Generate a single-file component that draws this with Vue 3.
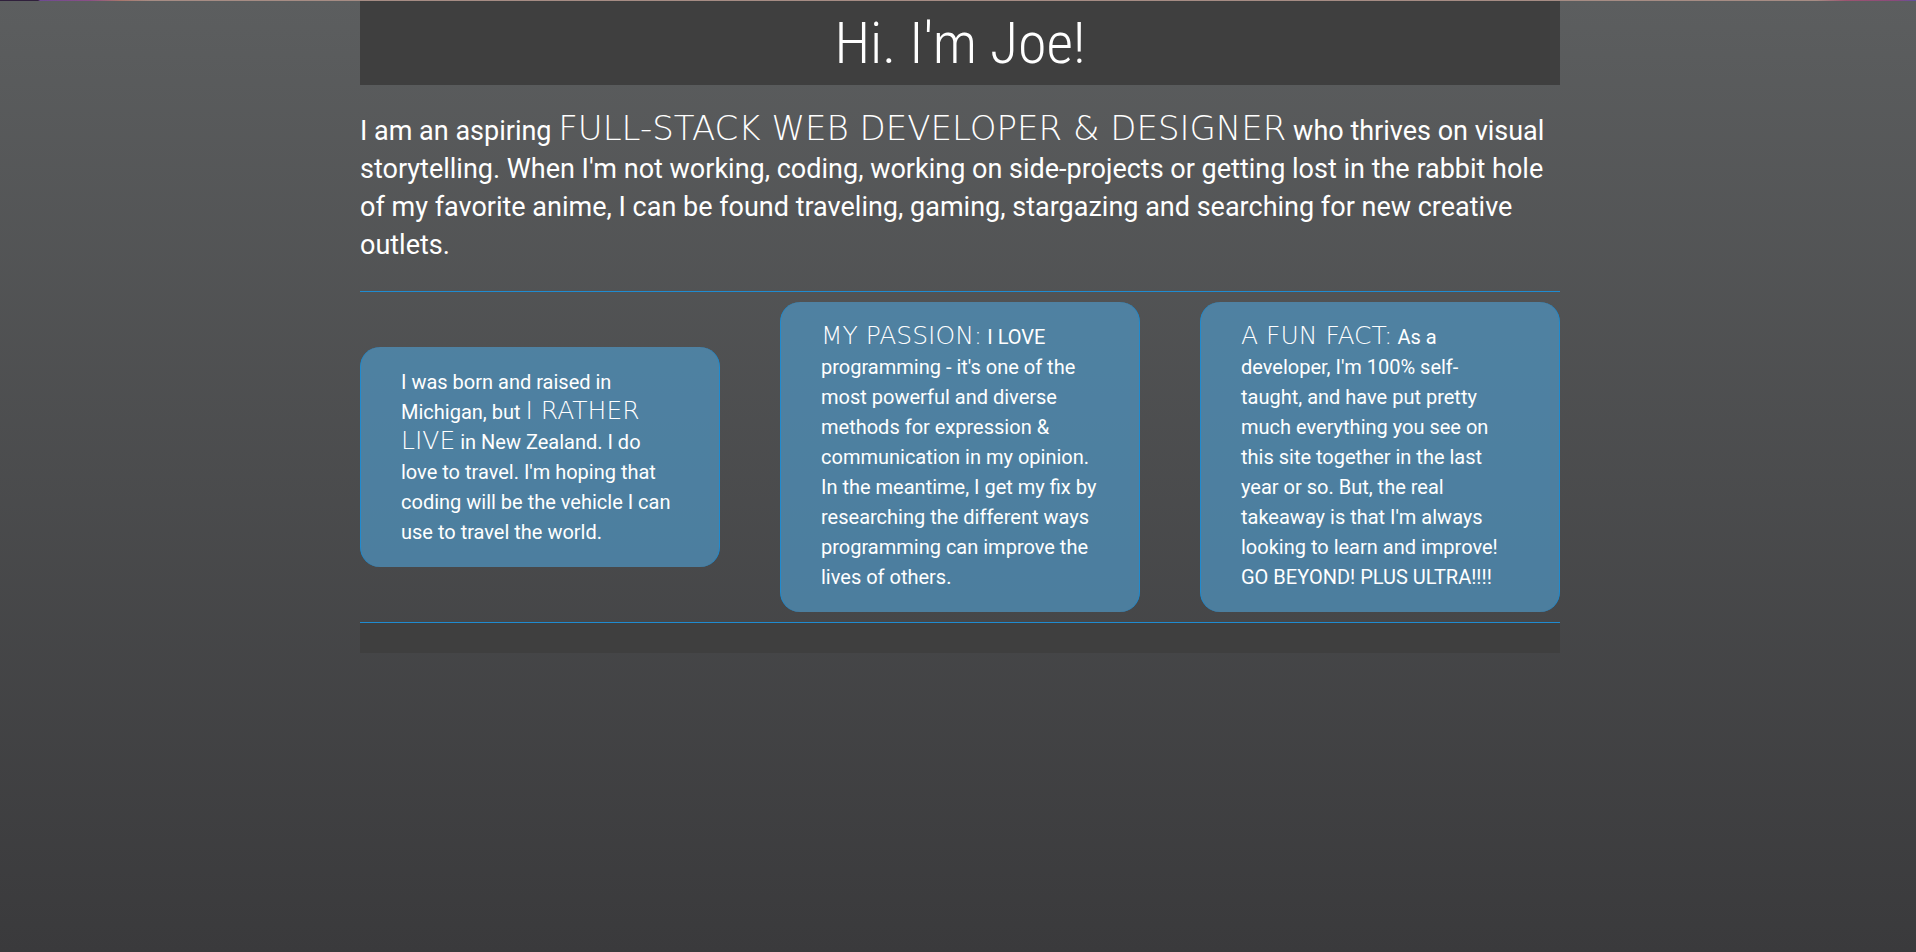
<script setup>
const cards = [
  [
    { text: 'I was born and raised in Michigan, but ' },
    { text: 'I rather live', accent: true },
    { text: " in New Zealand. I do love to travel. I'm hoping that coding will be the vehicle I can use to travel the world." },
  ],
  [
    { text: 'My Passion:', accent: true },
    { text: " I LOVE programming - it's one of the most powerful and diverse methods for expression & communication in my opinion. In the meantime, I get my fix by researching the different ways programming can improve the lives of others." },
  ],
  [
    { text: 'A Fun Fact:', accent: true },
    { text: " As a developer, I'm 100% self-taught, and have put pretty much everything you see on this site together in the last year or so. But, the real takeaway is that I'm always looking to learn and improve! GO BEYOND! PLUS ULTRA!!!!" },
  ],
]
</script>

<template>
  <div class="page">
    <main class="about">
      <header class="banner">
        <h1>Hi. I'm Joe!</h1>
      </header>
      <p class="intro">
        I am an aspiring <span class="accent">Full-Stack Web Developer &amp; Designer</span> who thrives on visual
        storytelling. When I'm not working, coding, working on side-projects or getting lost in the rabbit hole of my
        favorite anime, I can be found traveling, gaming, stargazing and searching for new creative outlets.
      </p>
      <section class="cards">
        <article v-for="(card, i) in cards" :key="i" class="card">
          <p><span v-for="(part, j) in card" :key="j" :class="{ accent: part.accent }">{{ part.text }}</span></p>
        </article>
      </section>
      <footer class="strip"></footer>
    </main>
  </div>
</template>

<style>
body {
  margin: 0;
}
</style>

<style scoped>
.page {
  box-sizing: border-box;
  min-height: 100vh;
  padding-left: 4px;
  background:
    linear-gradient(90deg, #30203c 0 38px, #6f4a92 40px, #8a4f86 90px, #a8756c 120px, #a68c84 150px, #a68c84 calc(100% - 100px), #9c5470 calc(100% - 70px), #8a4a7c calc(100% - 20px), #6350a0 100%) top / 100% 1px no-repeat,
    linear-gradient(#5c5e5f, #3a3a3c);
  color: #fff;
  font-family: Roboto, "Liberation Sans", sans-serif;
}

.about {
  max-width: 1200px;
  margin: 0 auto;
  padding-top: 1px;
}

.banner {
  background: #3f3f3f;
}

h1 {
  margin: 0;
  font-family: "Roboto Condensed", Roboto, sans-serif;
  font-size: 58px;
  font-weight: 300;
  line-height: 84px;
  text-align: center;
}

.intro {
  margin: 0;
  padding: 26px 0 27px;
  font-size: 27px;
  line-height: 38px;
}

.accent {
  font-family: "DejaVu Sans Light", "DejaVu Sans", sans-serif;
  font-weight: 200;
  line-height: 1;
  text-transform: uppercase;
}

.intro .accent {
  font-size: 34px;
}

.cards {
  display: grid;
  grid-template-columns: repeat(3, 1fr);
  align-items: center;
  column-gap: 60px;
  padding: 10px 0;
  border-top: 1px solid #1f8bd0;
  border-bottom: 1px solid #1f8bd0;
}

.card {
  padding: 20px 40px;
  border: solid #1f8bd0;
  border-width: 0 1px;
  border-radius: 20px;
  background: rgba(79, 149, 195, 0.7);
}

.card p {
  margin: 0;
  font-size: 20px;
  line-height: 30px;
}

.card .accent {
  font-size: 25px;
}

.strip {
  height: 30px;
  background: #3f3f3f;
}
</style>
